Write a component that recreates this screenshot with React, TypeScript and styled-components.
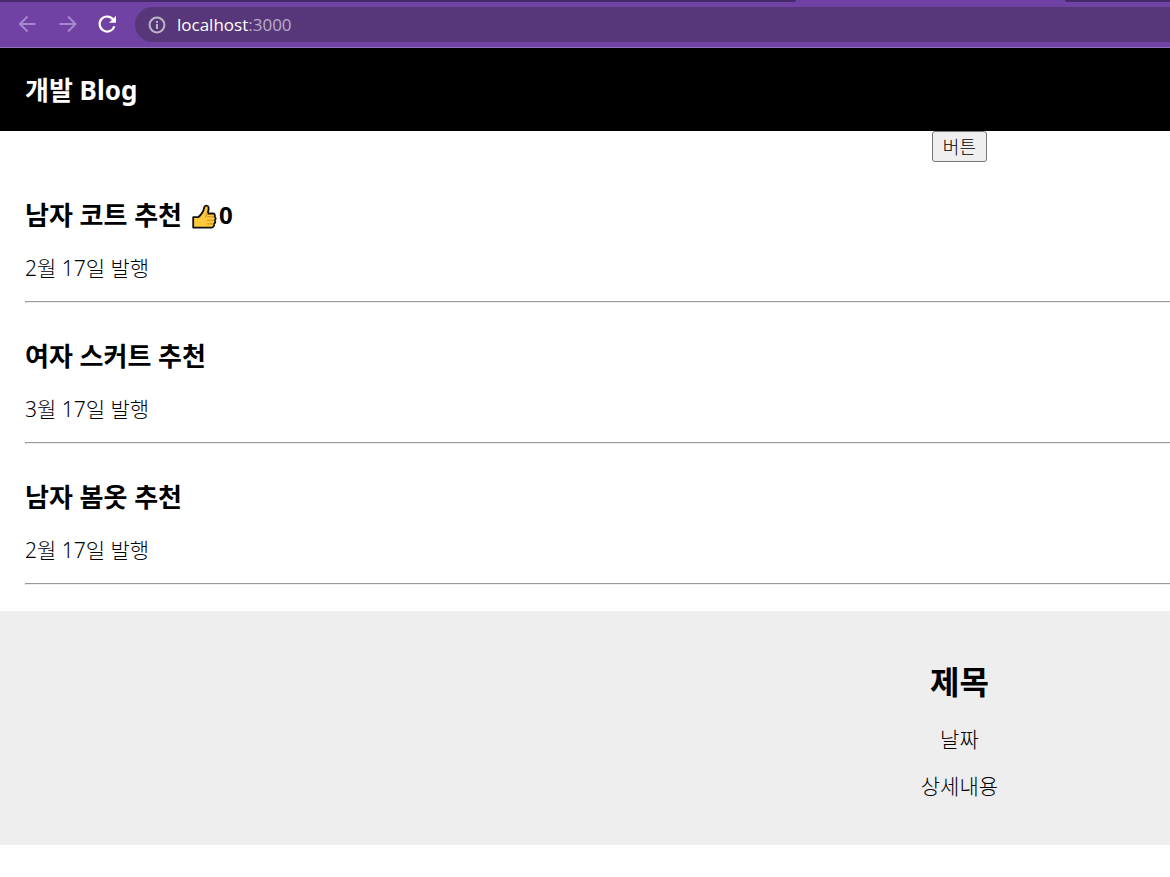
import React, { useState } from 'react';
import styled, { createGlobalStyle } from 'styled-components';

const GlobalStyle = createGlobalStyle`
  *, *::before, *::after { box-sizing: border-box; }
  body {
    margin: 0;
    background: #fff;
    color: #000;
    font-family: "Noto Sans", "Noto Sans CJK KR", sans-serif;
    font-size: 21px;
    overflow-x: hidden;
  }
  h1, h2, h3, p { margin: 0; }
`;

const TabEdge = styled.div`
  display: flex;
  justify-content: space-between;
  height: 2px;
  background: #6f42a3;
`;

const InactiveTab = styled.div<{ $width: string; $side: 'left' | 'right' }>`
  width: ${({ $width }) => $width};
  background: #46296a;
  border-radius: ${({ $side }) => ($side === 'left' ? '0 0 4px 0' : '0 0 0 4px')};
`;

const Toolbar = styled.nav`
  display: flex;
  align-items: center;
  height: 46px;
  padding-left: 15px;
  background: #6f42a3;
  border-bottom: 1px solid #9370bd;
`;

const NavButton = styled.button<{ $active?: boolean }>`
  display: flex;
  padding: 0 0 2px;
  margin-right: 16px;
  border: 0;
  background: none;
  color: ${({ $active }) => ($active ? '#fff' : '#a689cb')};
`;

const AddressBar = styled.div`
  display: flex;
  flex: 1;
  align-items: center;
  gap: 10px;
  height: 35px;
  padding-left: 12px;
  border-radius: 18px 0 0 18px;
  background: #573779;
  color: #b9adc8;
`;

const InfoButton = styled.button`
  display: flex;
  padding: 0;
  border: 0;
  background: none;
  color: #bdb6c4;
`;

const Address = styled.div`
  font-family: "Open Sans", sans-serif;
  font-size: 17px;
  line-height: 24px;
`;

const Host = styled.span`
  color: #fff;
`;

const BlogHeader = styled.header`
  padding: 24px 25px 23px;
  background: #000;
  color: #fff;
`;

const BlogTitle = styled.h1`
  font-size: 26px;
  line-height: 36px;
`;

/* Centres its content in the right-hand part of the page. */
const RightAligned = styled.div`
  display: flex;
  flex-direction: column;
  align-items: center;
  margin-left: 64%;
`;

const ActionButton = styled.button`
  height: 31px;
  padding: 0 10px;
  border: 1px solid #767676;
  border-radius: 3px;
  background: #efefef;
  color: #000;
  font-family: inherit;
  font-size: 18px;
  font-weight: 300;
  line-height: 28px;
`;

const PostList = styled.main`
  padding: 0 0 26px 25px;
`;

const Post = styled.article`
  padding-top: 37px;
`;

const PostTitle = styled.h3`
  display: flex;
  align-items: center;
  margin-bottom: 23px;
  font-size: 26px;
  line-height: 32px;
`;

const LikeButton = styled.button`
  display: flex;
  padding: 0;
  margin: 2px 2px 0 10px;
  border: 0;
  background: none;
`;

const LikeCount = styled.span`
  font-size: 24px;
`;

const PostDate = styled.p`
  margin-bottom: 19px;
  font-weight: 300;
  line-height: 28px;
`;

const Divider = styled.hr`
  height: 2px;
  margin: 0;
  border: 1px solid;
  border-color: #9a9a9a #eee #eee #9a9a9a;
  border-right: 0;
`;

const Detail = styled.section`
  padding: 49px 0 45px;
  background: #eee;
`;

const DetailTitle = styled.h2`
  margin-bottom: 21px;
  font-size: 32px;
  line-height: 44px;
`;

const DetailText = styled.p`
  font-weight: 300;
  line-height: 28px;

  & + & {
    margin-top: 19px;
  }
`;

const BackIcon = () => (
  <svg width="24" height="24" viewBox="0 0 24 24" fill="none" stroke="currentColor" strokeWidth="2">
    <path d="M20.500 12H5.500M12.500 4.500 5 12l7.500 7.500" />
  </svg>
);

const ForwardIcon = () => (
  <svg width="24" height="24" viewBox="0 0 24 24" fill="none" stroke="currentColor" strokeWidth="2">
    <path d="M4.500 12H20M13 4.500 20.500 12 13 19.500" />
  </svg>
);

const ReloadIcon = () => (
  <svg width="24" height="24" viewBox="0 0 24 24" fill="none" stroke="currentColor" strokeWidth="2.200">
    <path d="M18.600 8.200A7.500 7.500 0 1 0 19.300 14.200" />
    <path d="M21 3.800v7h-7z" fill="currentColor" stroke="none" />
  </svg>
);

const InfoIcon = () => (
  <svg width="20" height="20" viewBox="0 0 20 20" fill="none" stroke="currentColor" strokeWidth="2">
    <circle cx="10" cy="10" r="7.400" />
    <path d="M10 9v5M10 6v2" />
  </svg>
);

const ThumbIcon = () => (
  <svg width="25" height="25" viewBox="0 0 25 25" strokeLinejoin="round" strokeLinecap="round">
    <path
      d="M1.200 13.200H6.200C9 11 11.500 7.500 12.200 3.500 12.500 1.200 16 .8 16.600 3.500 17 5.500 16 8 15.600 9.500H21C23 9.500 23.400 11.700 22.300 12.500 24.100 13.300 24 15.600 22.700 16.300 23.900 17.500 23.300 19.300 22 19.900 22.500 21.600 21.500 23.600 19.500 23.600H1.200Z"
      fill="#ffc83d"
      stroke="#111"
      strokeWidth="1.800"
    />
    <path d="M15.500 9.500C14 11 13.500 11.700 13.300 13M15.500 12.700h6M15.500 16.300h6.300M15.500 19.900h5.500" fill="none" stroke="#d99a2b" strokeWidth="1.200" />
  </svg>
);

const posts = [
  { title: '남자 코트 추천', date: '2월 17일 발행', likeable: true },
  { title: '여자 스커트 추천', date: '3월 17일 발행', likeable: false },
  { title: '남자 봄옷 추천', date: '2월 17일 발행', likeable: false },
];

export default function App() {
  const [likes, setLikes] = useState(0);

  return (
    <>
      <GlobalStyle />
      <TabEdge>
        <InactiveTab $width="68%" $side="left" />
        <InactiveTab $width="9%" $side="right" />
      </TabEdge>
      <Toolbar aria-label="Browser">
        <NavButton aria-label="Back"><BackIcon /></NavButton>
        <NavButton aria-label="Forward"><ForwardIcon /></NavButton>
        <NavButton aria-label="Reload" $active><ReloadIcon /></NavButton>
        <AddressBar>
          <InfoButton aria-label="Site information"><InfoIcon /></InfoButton>
          <Address role="textbox" aria-label="Address" tabIndex={0}>
            <Host>localhost</Host>:3000
          </Address>
        </AddressBar>
      </Toolbar>

      <BlogHeader>
        <BlogTitle>개발 Blog</BlogTitle>
      </BlogHeader>
      <RightAligned>
        <ActionButton>버튼</ActionButton>
      </RightAligned>

      <PostList>
        {posts.map((post) => (
          <Post key={post.title}>
            <PostTitle>
              {post.title}
              {post.likeable && (
                <>
                  <LikeButton aria-label="Like" onClick={() => setLikes(likes + 1)}>
                    <ThumbIcon />
                  </LikeButton>
                  <LikeCount>{likes}</LikeCount>
                </>
              )}
            </PostTitle>
            <PostDate>{post.date}</PostDate>
            <Divider />
          </Post>
        ))}
      </PostList>

      <Detail>
        <RightAligned>
          <DetailTitle>제목</DetailTitle>
          <DetailText>날짜</DetailText>
          <DetailText>상세내용</DetailText>
        </RightAligned>
      </Detail>
    </>
  );
}
